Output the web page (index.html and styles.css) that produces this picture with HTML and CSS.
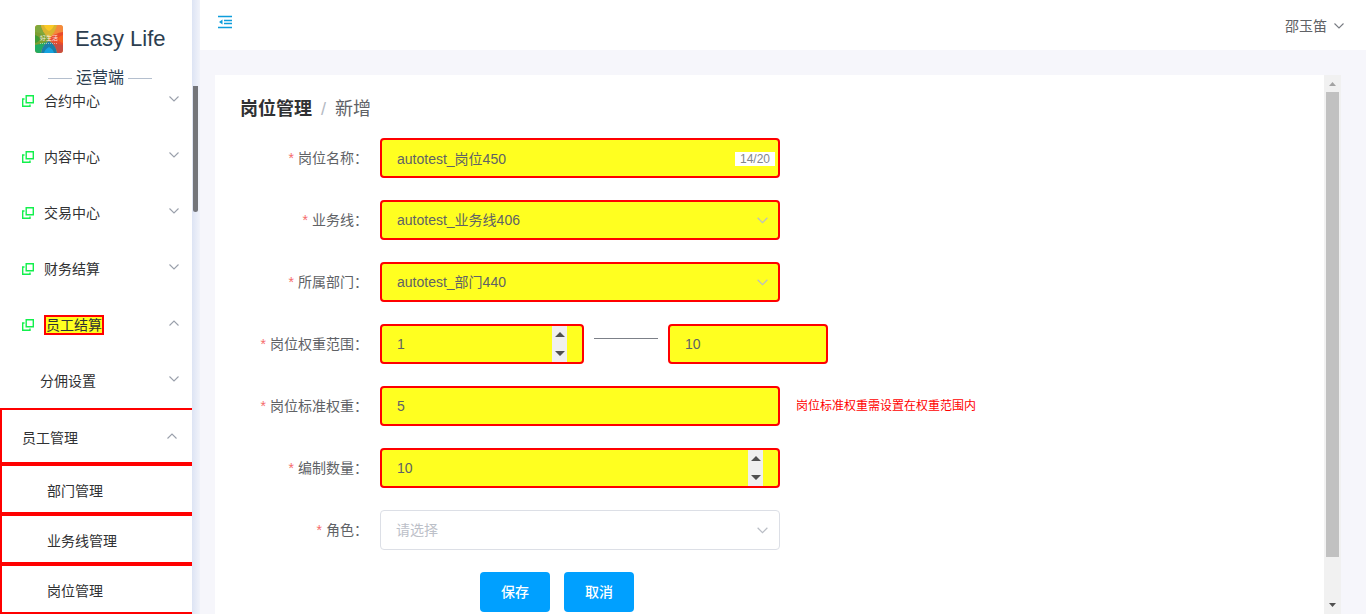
FILE: index.html
```html
<!DOCTYPE html>
<html lang="zh-CN">
<head>
<meta charset="utf-8">
<meta name="viewport" content="width=device-width, initial-scale=1">
<title>岗位管理 - Easy Life</title>
<link rel="stylesheet" href="styles.css">
</head>
<body>
<svg class="sprite" aria-hidden="true">
  <symbol id="chevron" viewBox="0 0 12 12"><path d="M1.500 3.500L6 8l4.500-4.500" fill="none" stroke="currentColor" stroke-width="1.1"/></symbol>
  <symbol id="copy" viewBox="0 0 14 14"><path d="M5.200 1.700h7.100v7.100H5.200zM3.500 5H1.700v7.300H9v-1.800" fill="none" stroke="currentColor" stroke-width="1.4"/></symbol>
</svg>
<div class="layout">
  <aside class="sidebar">
    <div class="sidebar-body">
      <div class="brand">
        <div class="brand-row">
          <svg class="logo" viewBox="0 0 28 28" role="img" aria-label="好生活">
            <defs><clipPath id="logo-clip"><rect width="28" height="28" rx="3"/></clipPath></defs>
            <g clip-path="url(#logo-clip)">
              <rect width="28" height="28" fill="#e9a233"/>
              <path d="M0 2q0-2 2-2h4q1 7 8 13L0 9z" fill="#7fa83c"/>
              <path d="M6 0h16q-1 7-8 13Q7 7 6 0z" fill="#d9b530"/>
              <path d="M9 0h10q-1 4-5 6-4-2-5-6z" fill="#fbc926"/>
              <path d="M22 0h6v9l-14 4q7-6 8-13z" fill="#f58a3c"/>
              <path d="M28 7v14q-8-1-14-7 6-6 14-7z" fill="#ea4a2c"/>
              <path d="M28 10v8q-4-1-5-4 1-3 5-4z" fill="#f8641e"/>
              <path d="M0 7v14q8-1 14-7-6-6-14-7z" fill="#7d9e31"/>
              <path d="M0 10v8q4-1 5-4-1-3-5-4z" fill="#3f9b35"/>
              <path d="M0 20q8-1 14-5-7 6-8 13H0z" fill="#21ab63"/>
              <path d="M28 20q-8-1-14-5 7 6 8 13h6z" fill="#c84d43"/>
              <path d="M6 28q1-8 8-12 7 4 8 12z" fill="#1a7fa8"/>
              <path d="M9 28q1-4 5-6 4 2 5 6z" fill="#16a3e0"/>
              <path d="M5 18.500h18" stroke="#e6eedd" stroke-dasharray="1 1" opacity=".6"/>
              <text x="14" y="15" class="logo-text">好生活</text>
            </g>
          </svg>
          <span class="brand-name">Easy Life</span>
        </div>
        <div class="brand-sub">运营端</div>
      </div>
      <nav class="menu">
        <ul class="menu-list">
          <li><a class="item" href="#"><svg class="copy"><use href="#copy"/></svg><span class="label">合约中心</span><svg class="arrow"><use href="#chevron"/></svg></a></li>
          <li><a class="item" href="#"><svg class="copy"><use href="#copy"/></svg><span class="label">内容中心</span><svg class="arrow"><use href="#chevron"/></svg></a></li>
          <li><a class="item" href="#"><svg class="copy"><use href="#copy"/></svg><span class="label">交易中心</span><svg class="arrow"><use href="#chevron"/></svg></a></li>
          <li><a class="item" href="#"><svg class="copy"><use href="#copy"/></svg><span class="label">财务结算</span><svg class="arrow"><use href="#chevron"/></svg></a></li>
          <li><a class="item" href="#"><svg class="copy"><use href="#copy"/></svg><span class="label marked">员工结算</span><svg class="arrow up"><use href="#chevron"/></svg></a></li>
          <li><a class="item nested" href="#"><span class="label">分佣设置</span><svg class="arrow"><use href="#chevron"/></svg></a></li>
          <li><a class="item group outlined" href="#"><span class="label">员工管理</span><svg class="arrow up"><use href="#chevron"/></svg></a></li>
          <li><a class="item leaf outlined" href="#"><span class="label">部门管理</span></a></li>
          <li><a class="item leaf outlined" href="#"><span class="label">业务线管理</span></a></li>
          <li><a class="item leaf outlined" href="#"><span class="label">岗位管理</span></a></li>
        </ul>
      </nav>
    </div>
    <div class="sidebar-track"><div class="sidebar-thumb"></div></div>
  </aside>
  <div class="content">
    <header class="topbar">
      <button class="fold" type="button" aria-label="收起菜单">
        <svg viewBox="0 0 14 14"><path d="M0 1.500h14M6 5.500h8M6 8.500h8M0 12.500h14" stroke="currentColor" stroke-width="1.7"/><path d="M4.500 4.500v5L1 7z" fill="currentColor"/></svg>
      </button>
      <button class="user" type="button">邵玉笛<svg class="user-arrow"><use href="#chevron"/></svg></button>
    </header>
    <main class="main">
      <section class="card">
        <div class="breadcrumb"><a href="#">岗位管理</a><span class="sep">/</span><span>新增</span></div>
        <form class="form">
          <div class="row">
            <label for="name"><i>*</i>岗位名称：</label>
            <div class="field"><input class="control filled" id="name" type="text" value="autotest_岗位450" maxlength="20"><span class="count">14/20</span></div>
          </div>
          <div class="row">
            <label for="line"><i>*</i>业务线：</label>
            <div class="field"><select class="control filled" id="line"><option>autotest_业务线406</option></select><svg class="caret"><use href="#chevron"/></svg></div>
          </div>
          <div class="row">
            <label for="dept"><i>*</i>所属部门：</label>
            <div class="field"><select class="control filled" id="dept"><option>autotest_部门440</option></select><svg class="caret"><use href="#chevron"/></svg></div>
          </div>
          <div class="row">
            <label for="min"><i>*</i>岗位权重范围：</label>
            <div class="range">
              <input class="control filled range-min" id="min" type="number" value="1">
              <span class="dash"></span>
              <input class="control filled range-max" type="text" value="10" aria-label="岗位权重上限">
            </div>
          </div>
          <div class="row">
            <label for="weight"><i>*</i>岗位标准权重：</label>
            <div class="field"><input class="control filled" id="weight" type="text" value="5"></div>
            <span class="hint">岗位标准权重需设置在权重范围内</span>
          </div>
          <div class="row">
            <label for="quota"><i>*</i>编制数量：</label>
            <div class="field"><input class="control filled" id="quota" type="number" value="10"></div>
          </div>
          <div class="row">
            <label for="role"><i>*</i>角色：</label>
            <div class="field"><select class="control empty" id="role"><option>请选择</option></select><svg class="caret"><use href="#chevron"/></svg></div>
          </div>
          <div class="actions">
            <button class="btn" type="button">保存</button>
            <button class="btn" type="button">取消</button>
          </div>
        </form>
      </section>
      <div class="scrollbar" aria-hidden="true">
        <svg class="scroll-arrow dim" viewBox="0 0 17 17"><path d="M5 11h7L8.500 7z" fill="currentColor"/></svg>
        <div class="scroll-track"><div class="scroll-thumb"></div></div>
        <svg class="scroll-arrow" viewBox="0 0 17 17"><path d="M5 6h7l-3.500 4z" fill="currentColor"/></svg>
      </div>
    </main>
  </div>
</div>
</body>
</html>
```

FILE: styles.css
```css
* { box-sizing: border-box; }
body {
  margin: 0;
  font: 14px/20px "Liberation Sans", "Noto Sans CJK SC", sans-serif;
  color: #606266;
  background: #f6f6fb;
}
a { color: inherit; text-decoration: none; }
button, input, select { font: inherit; color: inherit; }
svg { flex: none; }
.sprite { position: absolute; width: 0; height: 0; }
.layout { display: flex; height: 100vh; overflow: hidden; }

.sidebar { display: flex; flex: none; width: 200px; }
.sidebar-body { display: flex; flex-direction: column; flex: 1; min-width: 0; background: #fff; }
.sidebar-track { width: 8px; padding: 86px 2px 0 1px; background: linear-gradient(90deg, #dde4f4, #f1f3fa); }
.sidebar-thumb { height: 126px; border-radius: 0 0 3px 3px; background: #73757a; }
.brand { flex: none; height: 86px; padding-top: 24px; color: #2c3e50; }
.brand-row { display: flex; align-items: center; gap: 12px; height: 30px; padding-left: 35px; }
.logo { width: 28px; height: 28px; }
.logo-text { font-size: 6px; text-anchor: middle; fill: #fff; opacity: .85; }
.brand-name { font-size: 22px; line-height: 28px; }
.brand-sub { display: flex; align-items: center; justify-content: center; gap: 4px; margin-top: 13px; padding-left: 8px; font-size: 16px; line-height: 22px; }
.brand-sub::before, .brand-sub::after { content: ""; width: 24px; height: 1px; background: #b4bfce; }

.menu { flex: 1; min-height: 0; overflow: hidden; color: #303133; }
.menu-list { margin: -13px 0 0; padding: 0; list-style: none; }
.item { display: flex; align-items: center; height: 56px; padding: 0 12px 0 21px; }
.copy { width: 14px; height: 14px; margin-right: 9px; color: #12f04c; }
.label { line-height: 20px; }
.marked { border: 2px solid #f00; background: #ffff20; line-height: 16px; }
.arrow { width: 12px; height: 12px; margin: 0 0 4px auto; color: #9aa0ab; }
.up { transform: rotate(180deg); }
.nested { height: 55px; padding-left: 40px; }
.outlined { border: 2px solid #f00; border-right: 0; }
.group { padding: 4px 14px 0 20px; }
.leaf { height: 50px; padding: 4px 0 0 45px; }

.content { display: flex; flex-direction: column; flex: 1; min-width: 0; }
.topbar { display: flex; flex: none; justify-content: space-between; height: 50px; padding: 0 21px 0 18px; background: #fff; }
.topbar button { border: 0; background: none; }
.fold { width: 14px; height: 44px; padding: 0; color: #0d9ddb; }
.fold svg { display: block; width: 14px; height: 14px; }
.user { display: flex; align-items: center; gap: 6px; padding: 2px 0 0; }
.user-arrow { width: 12px; height: 12px; color: #777b82; }
.main { display: flex; flex: 1; min-height: 0; padding: 25px 25px 0 15px; }
.card { flex: 1; min-width: 0; padding: 20px 25px 0; background: #fff; overflow: hidden; }

.breadcrumb { display: flex; gap: 9px; font-size: 18px; line-height: 28px; }
.breadcrumb a { font-weight: 700; color: #303133; }
.sep { color: #b5bac4; }
.form { display: flex; flex-direction: column; gap: 22px; margin-top: 15px; }
.row { display: flex; align-items: center; }
.row label { flex: none; width: 140px; padding-right: 12px; text-align: right; }
.row i { margin-right: 4px; font-style: normal; color: #f56c6c; }
.field { position: relative; width: 400px; }
.control { display: block; width: 100%; height: 40px; margin: 0; padding: 0 15px; border: 1px solid #dcdfe6; border-radius: 4px; outline: 0; background: #fff; appearance: none; }
.filled { border: 2px solid #f00; background: #ffff20; }
.empty { color: #bcc0c8; }
.control::-webkit-inner-spin-button {
  appearance: none;
  width: 15px;
  height: 36px;
  opacity: 1;
  background: #f0f0f0 url("data:image/svg+xml,%3Csvg xmlns='http://www.w3.org/2000/svg' width='15' height='36'%3E%3Cpath d='M3 11h10L8 6zM3 25h10l-5 5z' fill='%23505050'/%3E%3C/svg%3E") no-repeat;
}
.count { position: absolute; top: 14px; right: 5px; padding: 0 5px; background: #fff; font-size: 12px; line-height: 14px; color: #83868c; }
.caret { position: absolute; top: 14px; right: 11px; width: 13px; height: 13px; color: #b9bdc5; pointer-events: none; }
.range { display: flex; gap: 10px; }
.range-min { width: 204px; }
.range-max { width: 160px; }
.dash { width: 64px; height: 1px; margin-top: 14px; background: #7c8088; }
.hint { margin-left: 16px; font-size: 12px; color: #f00; }
.actions { display: flex; gap: 14px; padding-left: 240px; }
.btn { width: 70px; height: 40px; padding: 0; border: 0; border-radius: 4px; background: #00a0ff; color: #fff; font-weight: 500; }

.scrollbar { display: flex; flex-direction: column; flex: none; width: 17px; background: #f1f1f1; }
.scroll-arrow { width: 17px; height: 17px; color: #505050; }
.dim { color: #a3a3a3; }
.scroll-track { flex: 1; padding: 0 2px; }
.scroll-thumb { height: 92%; background: #c1c1c1; }
```
